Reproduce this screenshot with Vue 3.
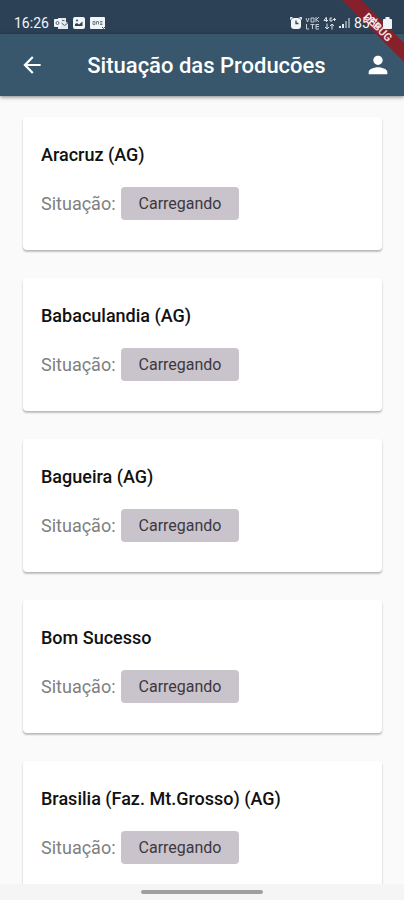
<template>
    <div class="screen">
        <div class="status-bar">
            <div class="status-left">
                <span>16:26</span>
                <svg width="14" height="12" viewBox="0 0 14 12" aria-hidden="true">
                    <path d="M4 1h8v4l2 1v6H4z" fill="#e3e9ee" />
                    <rect x="0" y="2" width="7" height="8" rx="1" fill="#f2f5f7" />
                    <circle cx="3.500" cy="6" r="1.500" fill="none" stroke="#52677a" />
                    <path d="M7.500 6l3 2.500L14 6M8 3.500h2.500" fill="none" stroke="#52677a" />
                </svg>
                <svg width="12" height="12" viewBox="0 0 12 12" aria-hidden="true">
                    <rect width="12" height="12" rx="2" fill="#f2f5f7" />
                    <path d="M2 9V7l2-1 2 1.500L9.500 4.500V9z" fill="#2f4358" />
                    <circle cx="4" cy="3.500" r="1" fill="#2f4358" />
                </svg>
                <svg width="16" height="12" viewBox="0 0 16 12" aria-hidden="true">
                    <path d="M1 0h13q1 0 1 1v11H1q-1 0-1-1V1q0-1 1-1z" fill="#f2f5f7" />
                    <path d="M3 4.500h2v3H3zM6.500 7.500v-3h2v3M10 4.500h2.500M10 6h2.500M10 7.500h2.500" fill="none" stroke="#6f8190" />
                    <path d="M12 10l1.500 1.500L16 9" fill="none" stroke="#2f4358" />
                </svg>
            </div>
            <div class="status-right">
                <svg width="12" height="12" viewBox="0 0 12 12" aria-hidden="true">
                    <path d="M0 3V1q0-1 1-1h2L0 3zM12 3V1q0-1-1-1H9z" fill="#f2f5f7" />
                    <rect x="1" y="1" width="10" height="11" rx="3" fill="#f2f5f7" />
                    <path d="M6 3.500v3h2.500" fill="none" stroke="#2f4358" stroke-width="1.300" />
                </svg>
                <svg width="15" height="13" viewBox="0 0 15 13" aria-hidden="true">
                    <g fill="none" stroke="#c3ccd4">
                        <path d="M1 1l1.500 4L4 1M6 1h3v4H6zM11 0v5M11 3l3-3M12 3l2 2" />
                        <path d="M1.500 7v5H4M5.500 7.500h4M7.500 7.500V12M11 7v5h3M11 9.500h3M11 7.500h3" />
                    </g>
                </svg>
                <svg width="13" height="13" viewBox="0 0 13 13" aria-hidden="true">
                    <g fill="none" stroke="#dde3e8">
                        <path d="M3.500 0L1 3.500h4M3.500 1v4M9 1H7v3h2V2.500M10 2.500h3M11.500 1v3" />
                        <path d="M4 6.500V12M2 10l2 2 2-2M9 12.500V7M7 9l2-2 2 2" />
                    </g>
                </svg>
                <svg width="12" height="12" viewBox="0 0 12 12" aria-hidden="true">
                    <path d="M0 9h2v2H0zM3 7h2v4H3z" fill="#e3e9ee" />
                    <path d="M6 4h2v7H6zM9 1h2v10H9z" fill="#8797a5" />
                </svg>
                <span>85%</span>
                <svg width="9" height="12" viewBox="0 0 9 12" aria-hidden="true">
                    <path d="M2.500 0h4v2H8q1 0 1 1v8q0 1-1 1H1q-1 0-1-1V3q0-1 1-1h1.500z" fill="#f2f5f7" />
                </svg>
            </div>
        </div>

        <header class="app-bar">
            <button type="button" class="icon-button" aria-label="Voltar">
                <svg width="26" height="26" viewBox="0 0 24 24" aria-hidden="true">
                    <path d="M20 11H7.830l5.590-5.590L12 4l-8 8 8 8 1.410-1.410L7.830 13H20v-2z" fill="#fff" />
                </svg>
            </button>
            <h1>Situação das Producões</h1>
            <button type="button" class="icon-button" aria-label="Perfil">
                <svg width="28" height="28" viewBox="0 0 24 24" aria-hidden="true">
                    <path d="M12 12c2.210 0 4-1.790 4-4s-1.790-4-4-4-4 1.790-4 4 1.790 4 4 4zm0 2c-2.670 0-8 1.340-8 4v2h16v-2c0-2.660-5.330-4-8-4z" fill="#fff" />
                </svg>
            </button>
        </header>

        <main class="list">
            <article v-for="producao in producoes" :key="producao.nome" class="card">
                <h2>{{ producao.nome }}</h2>
                <div class="situacao">
                    <span>Situação:</span>
                    <span class="chip">{{ producao.situacao }}</span>
                </div>
            </article>
        </main>

        <div class="nav-bar">
            <div class="handle"></div>
        </div>

        <svg class="ribbon" width="62" height="62" viewBox="0 0 62 62">
            <path d="M0 0h19l43 43v19z" fill="#88202c" />
            <text x="36" y="31" transform="rotate(45 36 27)" text-anchor="middle">DEBUG</text>
        </svg>
    </div>
</template>

<script setup>
import { ref } from 'vue';

const producoes = ref([
    { nome: 'Aracruz (AG)', situacao: 'Carregando' },
    { nome: 'Babaculandia (AG)', situacao: 'Carregando' },
    { nome: 'Bagueira (AG)', situacao: 'Carregando' },
    { nome: 'Bom Sucesso', situacao: 'Carregando' },
    { nome: 'Brasilia (Faz. Mt.Grosso) (AG)', situacao: 'Carregando' },
]);
</script>

<style>
body {
    background: #fafafa;
}
</style>

<style scoped>
.screen {
    position: relative;
    display: flex;
    flex-direction: column;
    height: 100vh;
    overflow: hidden;
    background: #fafafa;
    font-family: Roboto, sans-serif;
}

.status-bar {
    display: flex;
    flex: none;
    justify-content: space-between;
    padding: 15px 12px 3px 14px;
    background: #2d4156;
    color: #f2f5f7;
    font-size: 14px;
    line-height: 16px;
}

.status-left,
.status-right {
    display: flex;
    align-items: center;
    gap: 5px;
}

/* the system icons stay above the debug ribbon */
.status-right {
    z-index: 2;
    gap: 3px;
}

.app-bar {
    z-index: 1;
    display: flex;
    flex: none;
    align-items: center;
    height: 62px;
    padding: 0 12px 0 19px;
    background: #38566c;
    box-shadow: 0 1px 4px rgba(0, 0, 0, 0.5);
}

.app-bar h1 {
    flex: 1;
    margin: 0;
    padding: 2px 0 0 4px;
    color: #fff;
    font-size: 22px;
    font-weight: 500;
    line-height: 28px;
    text-align: center;
    white-space: nowrap;
}

.icon-button {
    display: flex;
    padding: 0;
    border: 0;
    background: none;
}

.list {
    flex: 1;
    min-height: 0;
    overflow: hidden;
    padding: 21px 22px 0 23px;
}

.card {
    margin-bottom: 28px;
    padding: 27px 18px 30px;
    border-radius: 4px;
    background: #fff;
    box-shadow: 0 2px 2px rgba(0, 0, 0, 0.2), 0 1px 2px rgba(0, 0, 0, 0.1);
}

.card h2 {
    margin: 0 0 21px;
    color: #111;
    font-size: 18px;
    font-weight: 500;
    line-height: 22px;
}

.situacao {
    display: flex;
    align-items: center;
    gap: 5px;
    color: #808080;
    font-size: 18px;
    line-height: 22px;
}

.chip {
    padding: 0 18px;
    border-radius: 4px;
    background: #c9c3cb;
    color: #3c383e;
    font-size: 16px;
    line-height: 33px;
}

.nav-bar {
    display: flex;
    flex: none;
    justify-content: center;
    padding: 6px 0;
    background: #f5f5f5;
}

.handle {
    width: 30%;
    height: 4px;
    border-radius: 2px;
    background: #9f9f9f;
}

.ribbon {
    z-index: 1;
    position: absolute;
    top: 0;
    right: 0;
}

.ribbon text {
    fill: #f0dfe1;
    font-size: 11px;
    font-weight: 700;
}
</style>
